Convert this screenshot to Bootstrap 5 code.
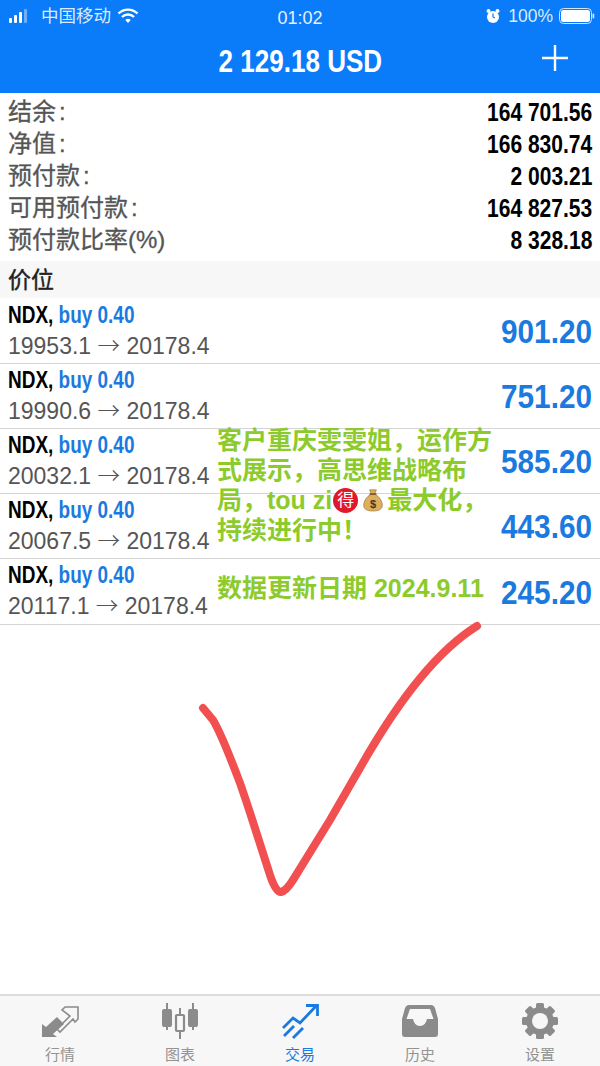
<!DOCTYPE html>
<html lang="zh"><head><meta charset="utf-8"><title>交易</title>
<link href="https://cdn.jsdelivr.net/npm/bootstrap@5.3.0/dist/css/bootstrap.min.css" rel="stylesheet">
<style>
html,body{height:100%}
body{width:600px;height:1066px;overflow:hidden;background:#fff;font-family:"Liberation Sans","Noto Sans CJK SC",sans-serif;position:relative}
.narrow{font-weight:700;display:inline-block;white-space:nowrap}
.app-top{height:93px;background:#0a7bf9;color:#fff}
.status-row{height:32px;padding:0 5px 0 8px;font-size:17.500px;color:#dcebff}
.status-carrier{margin-left:7px}
.status-wifi{margin-left:6px}
.status-time{left:0;right:0;top:5px;text-align:center;font-size:18px;color:#e6f1ff}
.status-batt{margin-left:2px}
.title-row{height:61px;padding-bottom:3px;position:relative}
.title-text{font-size:31px;line-height:1;transform:scaleX(.84)}
.plus-icon{position:absolute;right:32px;top:13px}
.summary{padding:4px 8px 4px;height:168px}
.sum-row{height:32px;font-size:24px;color:#555;-webkit-text-stroke:.3px #555}
.sum-label{margin-top:-2px}
.sum-row .narrow{color:#000;font-size:25px;transform:scaleX(.84);transform-origin:right center;-webkit-text-stroke:0}
.sum-colon{margin-left:3px;font-family:"Liberation Sans",sans-serif}
.sect{height:37px;background:#f7f7f7;padding:1px 8px 0;font-size:23px;color:#222;-webkit-text-stroke:.4px #222}
.pos-list{padding-top:1px}
.pos-row{height:65px;padding:1px 8px 0;border-bottom:1px solid #d5d5d5}
.pos-row:last-child{height:66px}
.pos-main{line-height:30px}
.pos-a{display:block;font-size:24px;color:#000;transform:scaleX(.79);transform-origin:left center}
.pos-a span{color:#1a7ae0}
.pos-b{font-size:23px;color:#555;margin-top:1px}
.pos-arrow{font-family:"Noto Sans CJK SC",sans-serif;font-size:22.500px;line-height:0;font-weight:300}
.pos-profit{font-size:34px;color:#1a7ae0;line-height:1;padding-top:14px;transform:scaleX(.875);transform-origin:right top}
.pos-row:last-child .pos-profit{padding-top:15px}
.note{position:absolute;left:217px;color:#8ccb2b;font-weight:700;font-size:25px;line-height:30px;white-space:nowrap}
.note-line{display:block;height:30px}
.note-one{top:425px;width:280px}
.note-two{top:573px}
.note-latin{font-size:25px}
.de-badge{display:inline-block;width:25px;height:25px;border-radius:50%;background:#e0182a;color:#fff;font-size:17px;line-height:25px;text-align:center;font-weight:400;vertical-align:top;margin:3px 0 0 1px}
.bag-icon{vertical-align:top;margin:2px 3px 0 4px}
.check-mark{position:absolute;left:0;top:0;pointer-events:none}
.tabbar{position:absolute;left:0;right:0;bottom:0;height:72px;background:#f7f7f7;border-top:2px solid #dcdcdc}
.tab-item{width:120px;color:#939393;font-size:15px;line-height:17px}
.tab-item.on{color:#1a7ae0}
.tab-icon{height:50px;display:flex;align-items:center;justify-content:center}
</style></head><body>
<header class="app-top">
 <div class="status-row d-flex align-items-center position-relative">
  <svg width="22" height="16" viewBox="0 0 22 16" class="me-1"><g fill="#fff"><rect x="1" y="10" width="3" height="5" rx="1"/><rect x="6" y="7" width="3" height="8" rx="1"/><rect x="11" y="4" width="3" height="11" rx="1"/></g><rect x="16" y="1" width="3" height="14" rx="1" fill="#6fb0fb"/></svg>
  <span class="status-carrier">中国移动</span>
  <svg class="status-wifi" width="22" height="16" viewBox="0 0 22 16"><g fill="none" stroke="#fff" stroke-width="2.400"><path d="M1.500 5.500a13.500 13.500 0 0 1 19 0"/><path d="M5 9a8.500 8.500 0 0 1 12 0"/></g><path d="M8.300 12a4 4 0 0 1 5.400 0L11 15z" fill="#fff"/></svg>
  <span class="position-absolute status-time">01:02</span>
  <span class="ms-auto d-flex align-items-center gap-1">
   <svg width="14" height="16" viewBox="0 0 14 16"><circle cx="7" cy="9" r="6" fill="#fff"/><circle cx="2.500" cy="3" r="2" fill="#fff"/><circle cx="11.500" cy="3" r="2" fill="#fff"/><path d="M7 5.500V9l2 1" stroke="#0a7bf9" stroke-width="1.200" fill="none"/></svg>
   <span class="ms-1">100%</span>
   <svg class="status-batt" width="36" height="16" viewBox="0 0 36 16"><rect x=".5" y=".5" width="32" height="15" rx="4" fill="none" stroke="#cfe3fd"/><rect x="2" y="2" width="29" height="12" rx="2.500" fill="#fff"/><rect x="33.500" y="5.500" width="1.800" height="5" rx=".9" fill="#cfe3fd"/></svg>
  </span>
 </div>
 <div class="title-row d-flex align-items-center justify-content-center">
  <span class="title-text narrow">2 129.18 USD</span>
  <svg class="plus-icon" width="26" height="26" viewBox="0 0 26 26"><path d="M13 0v26M0 13h26" stroke="#fff" stroke-width="2.400"/></svg>
 </div>
</header>
<section class="summary">
 <div class="sum-row d-flex justify-content-between align-items-center"><span class="sum-label">结余<span class="sum-colon">:</span></span><span class="narrow">164 701.56</span></div>
 <div class="sum-row d-flex justify-content-between align-items-center"><span class="sum-label">净值<span class="sum-colon">:</span></span><span class="narrow">166 830.74</span></div>
 <div class="sum-row d-flex justify-content-between align-items-center"><span class="sum-label">预付款<span class="sum-colon">:</span></span><span class="narrow">2 003.21</span></div>
 <div class="sum-row d-flex justify-content-between align-items-center"><span class="sum-label">可用预付款<span class="sum-colon">:</span></span><span class="narrow">164 827.53</span></div>
 <div class="sum-row d-flex justify-content-between align-items-center"><span class="sum-label">预付款比率(%)</span><span class="narrow">8 328.18</span></div>
</section>
<div class="sect d-flex align-items-center">价位</div>
<section class="pos-list">
 <div class="pos-row d-flex justify-content-between"><div class="pos-main"><div class="pos-a narrow">NDX, <span>buy 0.40</span></div><div class="pos-b">19953.1 <span class="pos-arrow">→</span> 20178.4</div></div><div class="pos-profit narrow">901.20</div></div>
 <div class="pos-row d-flex justify-content-between"><div class="pos-main"><div class="pos-a narrow">NDX, <span>buy 0.40</span></div><div class="pos-b">19990.6 <span class="pos-arrow">→</span> 20178.4</div></div><div class="pos-profit narrow">751.20</div></div>
 <div class="pos-row d-flex justify-content-between"><div class="pos-main"><div class="pos-a narrow">NDX, <span>buy 0.40</span></div><div class="pos-b">20032.1 <span class="pos-arrow">→</span> 20178.4</div></div><div class="pos-profit narrow">585.20</div></div>
 <div class="pos-row d-flex justify-content-between"><div class="pos-main"><div class="pos-a narrow">NDX, <span>buy 0.40</span></div><div class="pos-b">20067.5 <span class="pos-arrow">→</span> 20178.4</div></div><div class="pos-profit narrow">443.60</div></div>
 <div class="pos-row d-flex justify-content-between"><div class="pos-main"><div class="pos-a narrow">NDX, <span>buy 0.40</span></div><div class="pos-b">20117.1 <span class="pos-arrow">→</span> 20178.4</div></div><div class="pos-profit narrow">245.20</div></div>
</section>
<div class="note note-one"><span class="note-line">客户重庆雯雯姐&#xFF0C;运作方</span><span class="note-line">式展示&#xFF0C;高思维战略布</span><span class="note-line">局&#xFF0C;<span class="note-latin">tou zi</span><span class="de-badge">得</span><svg class="bag-icon" width="22" height="26" viewBox="0 0 26 28"><path d="M9 2h8l-2 5c6 3 9 9 9 13 0 5-4 7-11 7S2 25 2 20c0-4 3-10 9-13z" fill="#dcae5e" stroke="#9a7434" stroke-width=".8"/><path d="M9 7h8" stroke="#7a5524" stroke-width="2"/><text x="13" y="23" font-size="13" font-weight="700" text-anchor="middle" fill="#3a3a20">$</text></svg>最大化&#xFF0C;</span><span class="note-line">持续进行中&#xFF01;</span></div>
<div class="note note-two">数据更新日期 2024.9.11</div>
<svg class="check-mark" width="600" height="1066" viewBox="0 0 600 1066"><path d="M203 708L213 720C222 735 232 762 240 783Q247 803 253 822L270 875Q276 893 281 892Q286 891 293 880L330 820L360 768C390 715 430 655 477 626" fill="none" stroke="#f25050" stroke-width="8" stroke-linecap="round" stroke-linejoin="round"/></svg>
<nav class="tabbar d-flex text-center">
 <div class="tab-item"><div class="tab-icon"><svg width="38" height="34" viewBox="0 0 38 34"><path d="M1 33V20l4 3 11-10 7 7-11 10 4 3z" fill="#8b8b8b"/><path d="M21 6l3-3h13v12l-3 3-2-3-13 13-3-3 13-13z" fill="none" stroke="#8b8b8b" stroke-width="1.600"/></svg></div>行情</div>
 <div class="tab-item"><div class="tab-icon"><svg width="38" height="36" viewBox="0 0 38 36"><g fill="#8b8b8b"><rect x="1" y="6" width="10" height="18" rx="2"/><rect x="5" y="0" width="2" height="27"/><rect x="27" y="6" width="10" height="18" rx="2"/><rect x="31" y="0" width="2" height="27"/><rect x="18" y="5" width="2" height="7"/><rect x="18" y="28" width="2" height="8"/></g><rect x="15" y="12" width="8" height="16" rx="1" fill="none" stroke="#8b8b8b" stroke-width="2.200"/></svg></div>图表</div>
 <div class="tab-item on"><div class="tab-icon"><svg width="38" height="36" viewBox="0 0 38 36"><g fill="none" stroke="#1a7ae0" stroke-width="2.800"><path d="M2 25L12 15l7 5L36 2"/><path d="M25 2.500h11.500V13"/><path d="M3 33L13 23"/><path d="M12 35L22 25"/></g></svg></div>交易</div>
 <div class="tab-item"><div class="tab-icon"><svg width="36" height="32" viewBox="0 0 36 32"><path fill-rule="evenodd" d="M7 0h22c2 0 3 1 4 3l3 11v15c0 2-1 3-3 3H3c-2 0-3-1-3-3V14L3 3C4 1 5 0 7 0zM8 4L4.500 14H11c1 4 3 7 7 7s6-3 7-7h6.500L28 4z" fill="#8b8b8b"/></svg></div>历史</div>
 <div class="tab-item"><div class="tab-icon"><svg width="36" height="36" viewBox="0 0 36 36"><g fill="#8b8b8b"><circle cx="18" cy="18" r="14"/><g id="tt"><rect x="14" y="0" width="8" height="7" rx="1.500"/><rect x="14" y="29" width="8" height="7" rx="1.500"/></g><use href="#tt" transform="rotate(45 18 18)"/><use href="#tt" transform="rotate(90 18 18)"/><use href="#tt" transform="rotate(135 18 18)"/></g><circle cx="18" cy="18" r="8" fill="#f7f7f7"/></svg></div>设置</div>
</nav>
<script src="https://cdn.jsdelivr.net/npm/bootstrap@5.3.0/dist/js/bootstrap.bundle.min.js"></script>
</body></html>
